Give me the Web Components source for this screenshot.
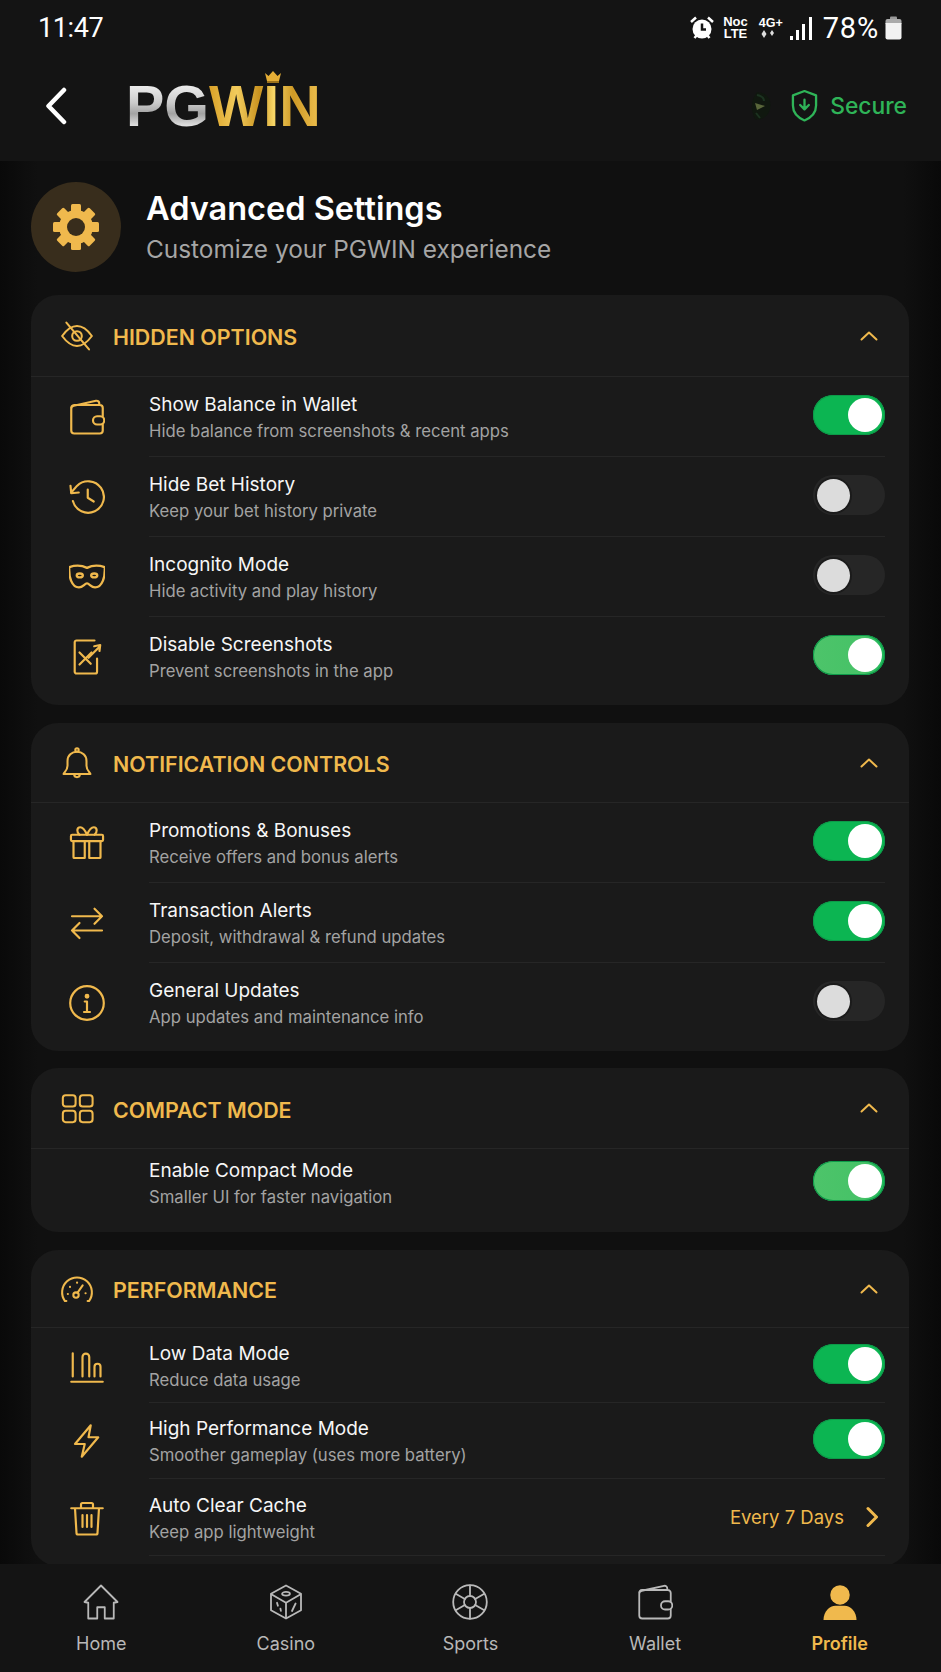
<!doctype html>
<html>
<head>
<meta charset="utf-8">
<title>Advanced Settings</title>
<style>
  html, body { margin: 0; padding: 0; background: #0c0c0c; }
  body { font-family: Inter, "Noto Sans", sans-serif; color: #fff; }
</style>
</head>
<body>
<app-shell>
  <app-header></app-header>
  <page-title></page-title>

  <settings-card heading="HIDDEN OPTIONS" icon="eyeoff" head="82" pad="8">
    <setting-row icon="wallet">Show Balance in Wallet<span slot="sub">Hide balance from screenshots &amp; recent apps</span><toggle-switch slot="control" on></toggle-switch></setting-row>
    <setting-row icon="history">Hide Bet History<span slot="sub">Keep your bet history private</span><toggle-switch slot="control"></toggle-switch></setting-row>
    <setting-row icon="mask">Incognito Mode<span slot="sub">Hide activity and play history</span><toggle-switch slot="control"></toggle-switch></setting-row>
    <setting-row icon="noshot" last>Disable Screenshots<span slot="sub">Prevent screenshots in the app</span><toggle-switch slot="control" on soft></toggle-switch></setting-row>
  </settings-card>

  <settings-card heading="NOTIFICATION CONTROLS" icon="bell" head="80" pad="8">
    <setting-row icon="gift">Promotions &amp; Bonuses<span slot="sub">Receive offers and bonus alerts</span><toggle-switch slot="control" on></toggle-switch></setting-row>
    <setting-row icon="arrows">Transaction Alerts<span slot="sub">Deposit, withdrawal &amp; refund updates</span><toggle-switch slot="control" on></toggle-switch></setting-row>
    <setting-row icon="info" last>General Updates<span slot="sub">App updates and maintenance info</span><toggle-switch slot="control"></toggle-switch></setting-row>
  </settings-card>

  <settings-card heading="COMPACT MODE" icon="grid" head="81" pad="15" style="margin-top:-1px">
    <setting-row h="68" last>Enable Compact Mode<span slot="sub">Smaller UI for faster navigation</span><toggle-switch slot="control" on soft></toggle-switch></setting-row>
  </settings-card>

  <settings-card heading="PERFORMANCE" icon="gauge" head="78" pad="10">
    <setting-row icon="bars" h="75">Low Data Mode<span slot="sub">Reduce data usage</span><toggle-switch slot="control" on></toggle-switch></setting-row>
    <setting-row icon="bolt" h="76">High Performance Mode<span slot="sub">Smoother gameplay (uses more battery)</span><toggle-switch slot="control" on></toggle-switch></setting-row>
    <setting-row icon="trash" h="77">Auto Clear Cache<span slot="sub">Keep app lightweight</span><value-link slot="control">Every 7 Days</value-link></setting-row>
  </settings-card>

  <bottom-nav slot="nav">
    <nav-item icon="home">Home</nav-item>
    <nav-item icon="dice">Casino</nav-item>
    <nav-item icon="ball">Sports</nav-item>
    <nav-item icon="wallet">Wallet</nav-item>
    <nav-item icon="person" active>Profile</nav-item>
  </bottom-nav>
</app-shell>

<script>
const GOLD = '#f0b94d'

const spokes = [-90, -30, 30, 90, 150, 210].map(a => {
  const r = a * Math.PI / 180
  const p = (d, f) => (12 + d * f(r)).toFixed(2)
  return `M${p(4, Math.cos)} ${p(4, Math.sin)}L${p(11, Math.cos)} ${p(11, Math.sin)}`
}).join('')

const icons = {
  eyeoff: `<path d="M1.5 12C5.5 6.5 8.5 5 12 5s6.5 1.5 10.5 7c-4 5.5-7 7-10.5 7s-6.5-1.5-10.5-7z"/><circle cx="12" cy="12" r="3.4"/><path d="M4.5 2.5l16 19"/>`,
  wallet: `<path d="M1.5 6.5V21a2 2 0 0 0 2 2H20.5a2 2 0 0 0 2-2V17M22.5 11.5V6a2 2 0 0 0-2-2H3.5a2 2 0 0 0-2 2.5c0-1 .6-1.8 1.7-2L18 1.2c1.3-.2 2.2.6 2.2 1.9V4"/><rect x="16" y="11.5" width="7.5" height="5.5" rx="2.7"/>`,
  history: `<path d="M2.6 14.7A10.5 10.5 0 1 0 5.3 4.6L1.5 9"/><path d="M1 4.5L1.5 9.5L6.5 9"/><path d="M12.5 7v5.5l4 2.5"/>`,
  mask: `<g transform="translate(12 12) scale(1.07) translate(-12 -12)"><path d="M1 5.8C5 4.5 9 4.8 12 6.3 15 4.8 19 4.5 23 5.8c.5 6-1.5 12.7-6 12.7-2.5 0-3.5-2.5-5-2.5s-2.5 2.5-5 2.5C2.5 18.5.5 11.8 1 5.8z"/><ellipse cx="7.5" cy="11" rx="1.9" ry="1.2"/><ellipse cx="16.5" cy="11" rx="1.9" ry="1.2"/></g>`,
  noshot: `<path d="M17 1H5a1.2 1.2 0 0 0-1.2 1.2v19.6A1.2 1.2 0 0 0 5 23h12.5a1.2 1.2 0 0 0 1.2-1.2V13"/><path d="M7 9l7.5 7.5M15 9l-8 8"/><path d="M13 12.5l7.5-7.5M16.8 4.8l4-.8-.5 4"/>`,
  bell: `<circle cx="12" cy="2.8" r="1.2"/><path d="M2.5 19.8c0-1.2 2.8-2 2.8-5.8v-3.5C5.3 6.8 8.3 4 12 4s6.7 2.8 6.7 6.5V14c0 3.8 2.8 4.6 2.8 5.8z"/><path d="M10 20a2 2 0 0 0 4 0"/>`,
  gift: `<rect x="1.3" y="6.5" width="21.4" height="4.2" rx=".8"/><path d="M3 10.7V21.5a.5.5 0 0 0 .5.5H10.5V10.7M13.5 10.7V22H20.5a.5.5 0 0 0 .5-.5V10.7"/><path d="M12 6.5C10.5 3 9 1.5 7.5 1.5 5 1.5 5 5 7 6.5M12 6.5C13.5 3 15 1.5 16.5 1.5 19 1.5 19 5 17 6.5"/>`,
  arrows: `<path d="M2 7.5H22M17 2.5l5 5-5 5"/><path d="M22 17H2M7 12l-5 5 5 5"/>`,
  info: `<circle cx="12" cy="12" r="11.2"/><circle cx="12" cy="7.5" r=".9" fill="${GOLD}"/><path d="M10.5 11H12V18M10 18H14"/>`,
  grid: `<rect x="2" y="3" width="9" height="8" rx="2"/><rect x="14" y="3" width="9" height="8" rx="2"/><rect x="2" y="14" width="9" height="8" rx="2"/><rect x="14" y="14" width="9" height="8" rx="2"/>`,
  gauge: `<path d="M4.5 20.5h-1a10.5 10.5 0 1 1 17 0h-1"/><circle cx="11.3" cy="16.3" r="1.9"/><path d="M12.3 14.7L16 9.5M5.5 15.5h.1M7 10.5h.1M12 7.5h.1M18 15h.1"/>`,
  bars: `<path d="M1.5 22.5H22.5M2.5 3.5V19M9 19V6a2 2 0 0 1 4.5 0V19M17 19V12.5a2 2 0 0 1 4 0V19"/>`,
  bolt: `<path d="M14.5 1.5L4 14h6.5L8.5 22.5 19.5 9.5H13z"/>`,
  trash: `<path d="M1.5 5.5H22.5M8 5.5V3a1 1 0 0 1 1-1h6a1 1 0 0 1 1 1V5.5M4 5.5L5 22a1 1 0 0 0 1 1H18a1 1 0 0 0 1-1L20 5.5M9 10v8M12 10v8M15 10v8"/>`,
  home: `<path d="M3.5 12.5V23H9.5V15.5H14.5V23H20.5V12.5M3.5 12.5L1 12 12 1 23 12 20.5 12.5"/>`,
  dice: `<path d="M12 1L22 6.5V17.5L12 23 2 17.5V6.5z"/><path d="M2.5 7L12 12.5 21.5 7M12 12.5V22.5"/><ellipse cx="12" cy="6.5" rx="2.6" ry="1.2"/><path d="M6 12.5l.6 2M8.3 16.5l.3 1.4M16 18l2.4-5"/>`,
  ball: `<circle cx="12" cy="12" r="11.2"/><circle cx="12" cy="12" r="4"/><path d="${spokes}"/>`,
  person: `<circle cx="12" cy="7.3" r="6.5" fill="${GOLD}" stroke="none"/><path d="M1 24C1 18.5 5 14.5 9 14.5H15C19 14.5 23 18.5 23 24z" fill="${GOLD}" stroke="none"/>`,
}

class UiIcon extends HTMLElement {
  connectedCallback() {
    const size = this.getAttribute('size') || 36
    const stroke = this.getAttribute('stroke') || GOLD
    const weight = this.getAttribute('weight') || 1.45
    this.attachShadow({ mode: 'open' }).innerHTML = `
      <style>:host { display: block; width: ${size}px; height: ${size}px; } svg { display: block; }</style>
      <svg width="${size}" height="${size}" viewBox="0 0 24 24" fill="none" stroke="${stroke}"
        stroke-width="${weight}" stroke-linecap="round" stroke-linejoin="round">${icons[this.getAttribute('name')] || ''}</svg>`
  }
}

const shellTemplate = document.createElement('template')
shellTemplate.innerHTML = `
  <style>
    :host { display: flex; flex-direction: column; width: 941px; height: 1672px; overflow: hidden;
      background: linear-gradient(90deg, #090909, #101010 4%, #101010 96%, #090909); }
    main { flex: 1; min-height: 0; overflow: hidden; padding: 21px 32px 0 31px;
      display: flex; flex-direction: column; gap: 18px; }
    ::slotted(app-header), ::slotted(bottom-nav) { flex: none; }
  </style>
  <slot name="top"></slot>
  <main><slot></slot></main>
  <slot name="nav"></slot>`

class AppShell extends HTMLElement {
  constructor() {
    super()
    this.attachShadow({ mode: 'open' }).appendChild(shellTemplate.content.cloneNode(true))
  }
  connectedCallback() {
    this.querySelector('app-header').slot = 'top'
  }
}

const headerTemplate = document.createElement('template')
headerTemplate.innerHTML = `
  <style>
    :host { display: block; height: 161px; background: #141414; color: #fff; }
    .status { height: 56px; box-sizing: border-box; padding: 0 39px 0 38px;
      display: flex; align-items: center; font-family: Roboto, sans-serif; }
    .time { font-size: 27px; letter-spacing: -.4px; flex: 1; }
    .tiny { display: flex; flex-direction: column; font: 700 13px/12px "Liberation Sans", sans-serif; margin-left: 9px; align-items: center; }
    .net { margin-left: 11px; width: 24px; font: 700 12.5px/12px "Liberation Sans", sans-serif; }
    .net svg { display: block; }
    .pct { font-size: 29px; letter-spacing: .8px; margin-left: 10px; }
    .bat { margin-left: 6px; }
    .bar { height: 105px; box-sizing: border-box; display: flex; align-items: center; padding: 0 34px 6px 45px; }
    .back { display: block; margin-right: 59px; }
    .logo { position: relative; font: 700 57.5px/60px "Liberation Sans", sans-serif; flex: 1; }
    .logo b { background-clip: text; -webkit-background-clip: text; color: transparent; }
    .pg { background-image: linear-gradient(180deg, #f0f0f0 15%, #cbcbcb 45%, #a2a2a2 62%, #eeeeee 85%); }
    .win { background-image: linear-gradient(90deg, #d9a128, #f3cc5d 25%, #c8921f 45%, #f8d768 58%, #cf9a26 75%, #eec04f); }
    .crown { position: absolute; left: 138px; top: -6px; }
    .blob { margin-right: 18px; }
    .secure { display: flex; align-items: center; gap: 12px; color: #2fb458; font: 500 22.8px Inter, sans-serif; }
  </style>
  <div class="status">
    <span class="time">11:47</span>
    <svg width="24" height="24" viewBox="0 0 24 24"><circle cx="12" cy="13" r="9.5" fill="#fff"/><path d="M12 7.5V13.5H16" stroke="#141414" stroke-width="2.5" fill="none"/><path d="M1 6l5-4.5M23 6l-5-4.5M4.5 22l2-2.5M19.5 22l-2-2.5" stroke="#fff" stroke-width="2.5"/></svg>
    <span class="tiny"><span>Noc</span><span>LTE</span></span>
    <span class="net"><span>4G+</span>
      <svg width="18" height="10" viewBox="0 0 18 10"><path d="M5 1l2.5 4L5 9 2.5 5zM13 1l2 3-2 3-2-3z" fill="#ddd"/></svg></span>
    <svg width="23" height="23" viewBox="0 0 23 23" style="margin-left:7px" fill="#fff"><path d="M0 23v-4h3v4zM6 23V13h3v10zM12 23V7h3v16zM19 23V0h3v23z"/></svg>
    <span class="pct">78%</span>
    <svg class="bat" width="17" height="24" viewBox="0 0 17 24"><path d="M5 3V1.5q0-1 1-1h5q1 0 1 1V3z" fill="#999"/><path d="M2.5 3H14.5q2 0 2 2v3H.5V5q0-2 2-2z" fill="#aaa"/><path d="M.5 7H16.5V21.5q0 2-2 2H2.5q-2 0-2-2z" fill="#f2f2f2"/></svg>
  </div>
  <div class="bar">
    <svg class="back" width="22" height="38" viewBox="0 0 22 38"><path d="M19 3L3.5 19 19 35" fill="none" stroke="#fff" stroke-width="4.5" stroke-linecap="round" stroke-linejoin="round"/></svg>
    <div class="logo"><b class="pg">PG</b><b class="win">WIN</b>
      <svg class="crown" width="18" height="13" viewBox="0 0 18 13"><path d="M1 3l3.5 3L9 1l4.5 5L17 3l-2 8H3z" fill="#e5ae36"/><path d="M3 12h12" stroke="#c8921f" stroke-width="1.5"/></svg>
    </div>
    <svg class="blob" width="24" height="30" viewBox="0 0 24 30"><path d="M8 1C18 2 23 8 21 18 19 26 12 30 6 28 2 20 1 10 8 1z" fill="#10180f"/><path d="M6 12l10 3-8 4z" fill="#59663a"/><path d="M8 4c5 1 7 3 7 6M7 22l4 5" stroke="#1c3320" stroke-width="2" fill="none"/></svg>
    <span class="secure">
      <svg width="27" height="33" viewBox="0 0 28 34" fill="none" stroke="#2fb458" stroke-width="2.4" stroke-linejoin="round" stroke-linecap="round"><path d="M14 2l12 4.5V17c0 7.5-5 12.5-12 15.5C7 29.5 2 24.5 2 17V6.5z"/><path d="M14 11v9M9.5 16.5L14 21l4.5-4.5"/></svg>
      Secure
    </span>
  </div>`

class AppHeader extends HTMLElement {
  constructor() {
    super()
    this.attachShadow({ mode: 'open' }).appendChild(headerTemplate.content.cloneNode(true))
  }
}

const gearTeeth = Array.from({ length: 8 }, (_, i) =>
  `<rect x="19" y="1" width="10" height="12" rx="1.5" fill="${GOLD}" transform="rotate(${i * 45} 24 24)"/>`).join('')

const titleTemplate = document.createElement('template')
titleTemplate.innerHTML = `
  <style>
    :host { display: flex; align-items: center; gap: 25px; flex: none; height: 90px; margin-bottom: 5px; }
    .badge { width: 90px; height: 90px; border-radius: 50%; background: #382d1c;
      display: flex; align-items: center; justify-content: center; }
    .words { padding-top: 1px; }
    h1 { margin: 0; font: 600 32.5px/40px Inter, sans-serif; color: #fff; }
    p { margin: 3px 0 0; font: 400 24.4px/34px Inter, sans-serif; color: #a6a6a6; }
  </style>
  <div class="badge">
    <svg width="48" height="48" viewBox="0 0 48 48">${gearTeeth}<circle cx="24" cy="24" r="17" fill="${GOLD}"/><circle cx="24" cy="24" r="9" fill="#382d1c"/></svg>
  </div>
  <div class="words"><h1>Advanced Settings</h1><p>Customize your PGWIN experience</p></div>`

class PageTitle extends HTMLElement {
  constructor() {
    super()
    this.attachShadow({ mode: 'open' }).appendChild(titleTemplate.content.cloneNode(true))
  }
}

class SettingsCard extends HTMLElement {
  connectedCallback() {
    const head = this.getAttribute('head') || 80
    const pad = this.getAttribute('pad') || 8
    this.attachShadow({ mode: 'open' }).innerHTML = `
      <style>
        :host { display: block; flex: none; background: #1a1a1a; border-radius: 27px; padding-bottom: ${pad}px; }
        header { height: ${head}px; box-sizing: border-box; border-bottom: 1px solid #262626;
          display: flex; align-items: center; padding: 0 31px 0 29px; gap: 19px; }
        h2 { flex: 1; margin: 0; padding-top: 3px; color: ${GOLD}; font: 600 21.4px/30px Inter, sans-serif; }
        .chev { display: block; }
      </style>
      <header>
        <ui-icon name="${this.getAttribute('icon')}" size="34"></ui-icon>
        <h2>${this.getAttribute('heading')}</h2>
        <svg class="chev" width="18" height="12" viewBox="0 0 18 12"><path d="M1.5 9.5L9 2.5 16.5 9.5" fill="none" stroke="${GOLD}" stroke-width="2" stroke-linecap="round" stroke-linejoin="round"/></svg>
      </header>
      <slot></slot>`
  }
}

class SettingRow extends HTMLElement {
  connectedCallback() {
    const h = this.getAttribute('h') || 80
    const icon = this.getAttribute('icon')
    this.attachShadow({ mode: 'open' }).innerHTML = `
      <style>
        :host { display: flex; align-items: center; padding: 0 24px 0 36px; }
        .icon { width: 40px; height: 36px; margin-right: 42px; flex: none; display: flex; justify-content: center; }
        .body { flex: 1; height: ${h}px; box-sizing: border-box; display: flex; align-items: center;
          border-bottom: 1px solid ${this.hasAttribute('last') ? 'transparent' : '#262626'}; }
        .text { flex: 1; padding-top: 3px; }
        .title { font: 400 19px/27px Inter, sans-serif; color: #f6f6f6; }
        .sub { font: 400 16.7px/27px Inter, sans-serif; color: #a3a3a3; }
      </style>
      <div class="icon">${icon ? `<ui-icon name="${icon}"></ui-icon>` : ''}</div>
      <div class="body">
        <div class="text">
          <div class="title"><slot></slot></div>
          <div class="sub"><slot name="sub"></slot></div>
        </div>
        <slot name="control"></slot>
      </div>`
  }
}

const toggleTemplate = document.createElement('template')
toggleTemplate.innerHTML = `
  <style>
    :host { display: flex; align-items: center; flex: none; width: 72px; height: 40px; box-sizing: border-box;
      border-radius: 20px; padding: 0 4px; background: #262626; margin-bottom: 3px; }
    :host([on]) { justify-content: flex-end; padding: 0 3px; background: #0cb552; box-shadow: inset 0 0 0 1px #0d9a49; }
    :host([soft]) { background: linear-gradient(90deg, #4dc46a, #46c267 70%, #1db758); }
    i { display: block; width: 33px; height: 33px; border-radius: 50%; background: #dcdcdc; box-shadow: 0 0 0 2px #1b1b1b; }
    :host([on]) i { width: 34px; height: 34px; background: #fff; box-shadow: none; }
  </style>
  <i></i>`

class ToggleSwitch extends HTMLElement {
  constructor() {
    super()
    this.attachShadow({ mode: 'open' }).appendChild(toggleTemplate.content.cloneNode(true))
  }
}

const valueTemplate = document.createElement('template')
valueTemplate.innerHTML = `
  <style>
    :host { display: flex; align-items: center; gap: 21px; color: ${GOLD}; font: 400 18.5px/26px Inter, sans-serif; padding-right: 6px; }
    svg { display: block; }
  </style>
  <slot></slot>
  <svg width="14" height="22" viewBox="0 0 14 22"><path d="M3 2.5L11.5 11 3 19.5" fill="none" stroke="${GOLD}" stroke-width="3" stroke-linecap="round" stroke-linejoin="round"/></svg>`

class ValueLink extends HTMLElement {
  constructor() {
    super()
    this.attachShadow({ mode: 'open' }).appendChild(valueTemplate.content.cloneNode(true))
  }
}

const navTemplate = document.createElement('template')
navTemplate.innerHTML = `
  <style>
    :host { display: grid; grid-template-columns: repeat(5, 1fr); height: 108px; box-sizing: border-box;
      padding: 20px 9px 0; background: #141414; }
  </style>
  <slot></slot>`

class BottomNav extends HTMLElement {
  constructor() {
    super()
    this.attachShadow({ mode: 'open' }).appendChild(navTemplate.content.cloneNode(true))
  }
}

class NavItem extends HTMLElement {
  connectedCallback() {
    const active = this.hasAttribute('active')
    this.attachShadow({ mode: 'open' }).innerHTML = `
      <style>
        :host { display: flex; flex-direction: column; align-items: center; }
        .box { height: 36px; display: flex; align-items: center; }
        .label { margin-top: 12px; font: ${active ? 600 : 400} 18px/24px Inter, sans-serif; color: ${active ? GOLD : '#b8b8b8'}; }
      </style>
      <div class="box"><ui-icon name="${this.getAttribute('icon')}" stroke="#b9b9b9" weight="1.2"></ui-icon></div>
      <div class="label"><slot></slot></div>`
  }
}

customElements.define('ui-icon', UiIcon)
customElements.define('app-shell', AppShell)
customElements.define('app-header', AppHeader)
customElements.define('page-title', PageTitle)
customElements.define('settings-card', SettingsCard)
customElements.define('setting-row', SettingRow)
customElements.define('toggle-switch', ToggleSwitch)
customElements.define('value-link', ValueLink)
customElements.define('bottom-nav', BottomNav)
customElements.define('nav-item', NavItem)
</script>
</body>
</html>
